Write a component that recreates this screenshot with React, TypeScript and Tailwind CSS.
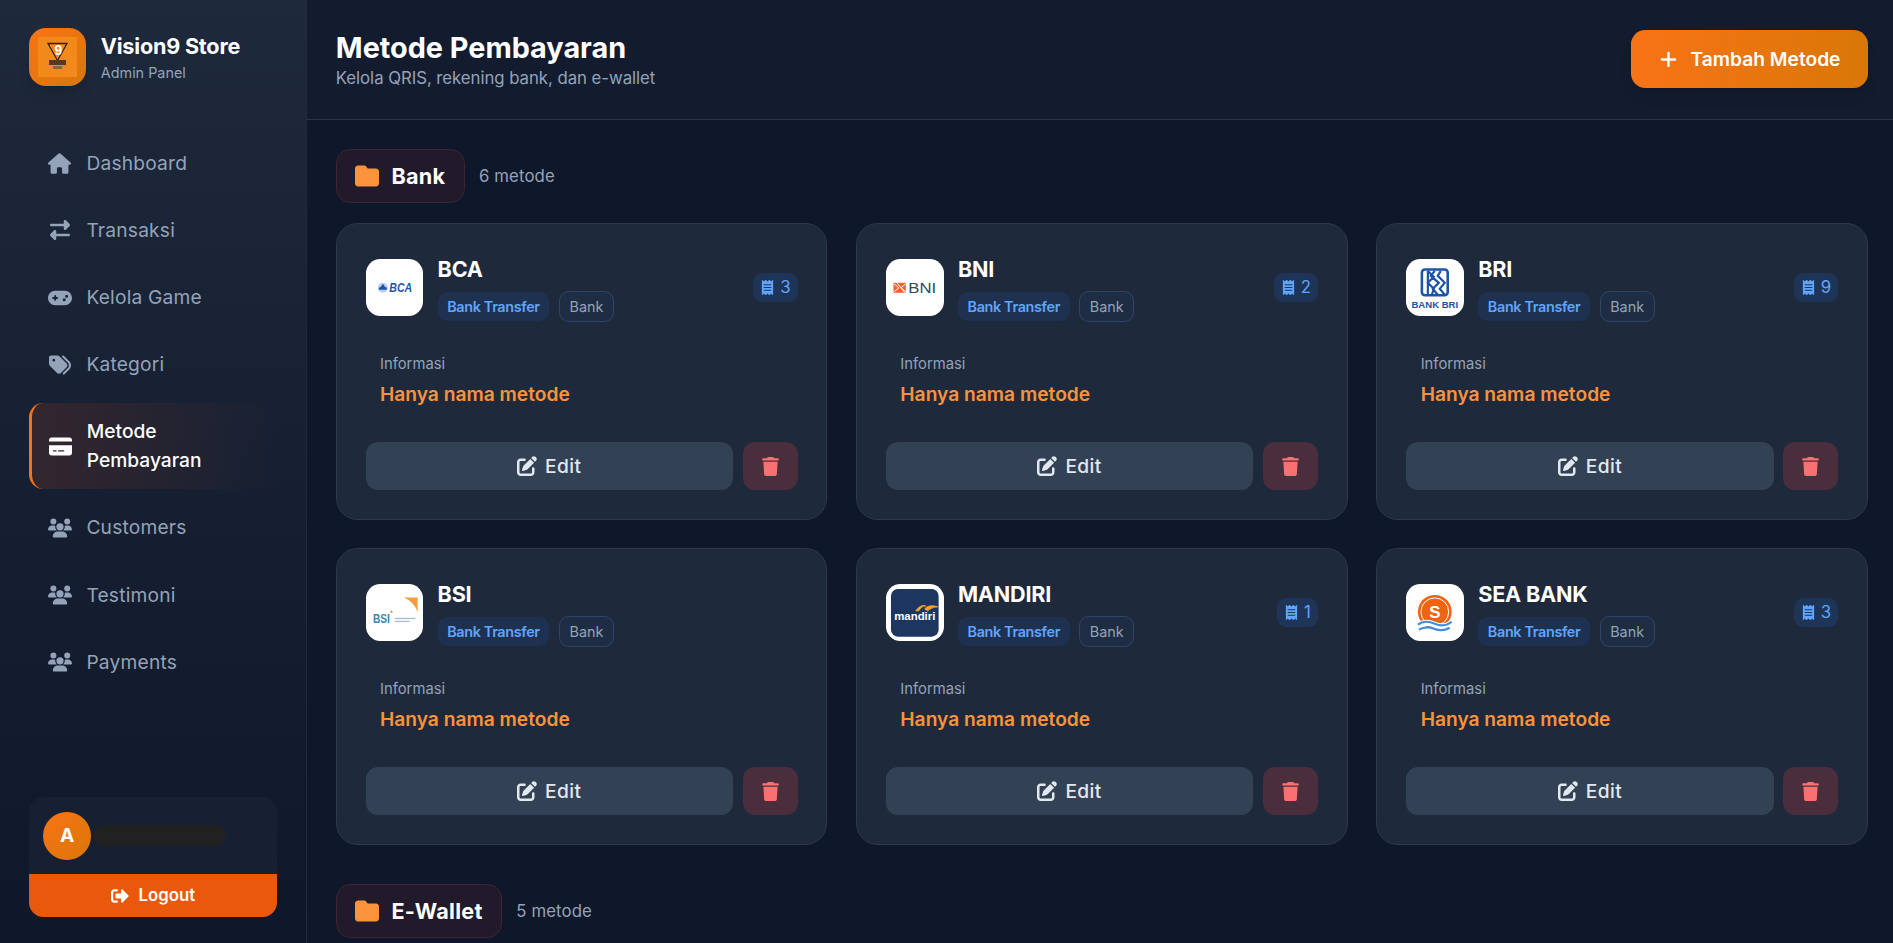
import type { ReactNode } from "react";
import { FaReceipt, FaSignOutAlt } from "react-icons/fa";
import {
  FaCreditCard, FaFolder, FaGamepad, FaHouse, FaPenToSquare, FaPlus, FaRightLeft,
  FaTags, FaTrash, FaUsers,
} from "react-icons/fa6";

const nav = [
  { label: "Dashboard", icon: <FaHouse size={23} /> },
  { label: "Transaksi", icon: <FaRightLeft size={20} /> },
  { label: "Kelola Game", icon: <FaGamepad size={24} /> },
  { label: "Kategori", icon: <FaTags size={22} /> },
  { label: "Metode Pembayaran", icon: <FaCreditCard size={23} />, active: true },
  { label: "Customers", icon: <FaUsers size={24} /> },
  { label: "Testimoni", icon: <FaUsers size={24} /> },
  { label: "Payments", icon: <FaUsers size={24} /> },
];

function BcaLogo() {
  return (
    <svg viewBox="0 0 58 58" className="w-full h-full">
      <circle cx="17" cy="29" r="5" fill="#bcd0ea" />
      <path d="M13 31h8v-2l-2-1-2-3-2 3-2 1z" fill="#1a56a8" />
      <text x="23.500" y="33.500" fontSize="12.500" fontWeight="800" fontStyle="italic" fill="#1a56a8" fontFamily="Liberation Sans, sans-serif" textLength="23" lengthAdjust="spacingAndGlyphs">BCA</text>
    </svg>
  );
}

function BniLogo() {
  return (
    <svg viewBox="0 0 58 58" className="w-full h-full">
      <rect x="7.500" y="24" width="12.500" height="10" fill="#f0642c" />
      <path d="M8 25l5 4-5 4M20 25l-5 4 5 4M11 24l8 10" stroke="#fff" strokeWidth="1" fill="none" />
      <text x="22.500" y="34" fontSize="15" fill="#2d4a68" fontFamily="Liberation Sans, sans-serif" textLength="28" lengthAdjust="spacingAndGlyphs">BNI</text>
    </svg>
  );
}

function BriLogo() {
  return (
    <svg viewBox="0 0 58 58" className="w-full h-full">
      <rect x="16" y="10.500" width="26" height="26" rx="3" fill="#fff" stroke="#1c54a6" strokeWidth="2.600" />
      <path d="M22 12v24M22 12l6 6-6 6 6 6-2 6M29 12l-4 5 8 7-6 6 5 6M35 12l-3 5 7 7-5 6 5 6" fill="none" stroke="#1c54a6" strokeWidth="2.200" />
      <text x="5.500" y="49" fontSize="9.800" fontWeight="700" fill="#1c54a6" fontFamily="Liberation Sans, sans-serif" textLength="47" lengthAdjust="spacingAndGlyphs">BANK BRI</text>
    </svg>
  );
}

function BsiLogo() {
  return (
    <svg viewBox="0 0 58 58" className="w-full h-full">
      <path d="M38 13.500h14v15c-2-7-7-12-14-15z" fill="#f59a42" />
      <text x="7" y="39" fontSize="13.500" fontWeight="700" fill="#3f86a8" fontFamily="Liberation Sans, sans-serif" textLength="17" lengthAdjust="spacingAndGlyphs">BSI</text>
      <circle cx="25.600" cy="28" r="1.200" fill="#f59a42" />
      <rect x="29" y="34" width="21" height="1.400" fill="#a9c0cc" />
      <rect x="29" y="37" width="15" height="1.400" fill="#a9c0cc" />
    </svg>
  );
}

function MandiriLogo() {
  return (
    <svg viewBox="0 0 58 58" className="w-full h-full">
      <rect x="5" y="5" width="48" height="48" rx="7" fill="#1d3660" />
      <path d="M30 27c3-4 6-6 10-5-3 0-5 2-7 5zM39 25c3-3 7-4 13-2-4 0-8 2-10 4z" fill="#f2a033" stroke="#f2a033" />
      <text x="29" y="36" textAnchor="middle" fontSize="11.500" fontWeight="600" fill="#fff" fontFamily="Liberation Sans, sans-serif">mandiri</text>
    </svg>
  );
}

function SeaLogo() {
  return (
    <svg viewBox="0 0 58 58" className="w-full h-full">
      <circle cx="29" cy="28" r="17" fill="#ee6413" />
      <circle cx="29" cy="28" r="14" fill="none" stroke="#fff" strokeWidth="1" />
      <text x="29" y="34" textAnchor="middle" fontSize="17" fontWeight="700" fill="#fff" fontFamily="Liberation Sans, sans-serif">S</text>
      <path d="M12 42c5-4 10-4 17-1s12 2 17-2" fill="none" stroke="#fff" strokeWidth="6" />
      <path d="M12 41c5-4 10-4 17-1s12 2 17-2M13 46c5-3 10-3 15-1s11 2 16-1" fill="none" stroke="#3f8fe0" strokeWidth="2.200" />
    </svg>
  );
}

const banks: { name: string; logo: ReactNode; count?: number }[] = [
  { name: "BCA", logo: <BcaLogo />, count: 3 },
  { name: "BNI", logo: <BniLogo />, count: 2 },
  { name: "BRI", logo: <BriLogo />, count: 9 },
  { name: "BSI", logo: <BsiLogo /> },
  { name: "MANDIRI", logo: <MandiriLogo />, count: 1 },
  { name: "SEA BANK", logo: <SeaLogo />, count: 3 },
];

function SectionHead({ title, count }: { title: string; count: string }) {
  return (
    <div className="flex items-center gap-[14px]">
      <div className="flex items-center gap-[12px] h-[54px] px-[18.6px] rounded-[14.4px] bg-[#211a2a] border border-[#3d2534]">
        <FaFolder size={24} className="text-[#fb923c]" />
        <span className="text-[21.6px] font-bold tracking-[0.3px] text-white">{title}</span>
      </div>
      <span className="text-[16.8px] leading-[27px] pt-[1px] tracking-[0.1px] text-[#94a3b8]">{count}</span>
    </div>
  );
}

function MethodCard({ name, logo, count }: { name: string; logo: ReactNode; count?: number }) {
  return (
    <div className="h-[297px] rounded-[21.6px] bg-[#1e293b] border border-[#2c3a4f] p-[28.8px] flex flex-col">
      <div className="flex items-center gap-[14.4px]">
        <div className="w-[57.6px] h-[57.6px] shrink-0 rounded-[14.4px] bg-white overflow-hidden">{logo}</div>
        <div className="flex-1">
          <div className="text-[21.6px] leading-[33.6px] font-bold tracking-[-0.2px] text-white">{name}</div>
          <div className="flex items-center gap-[9.6px] mt-[4.8px]">
            <span className="h-[29px] flex items-center px-[9.6px] rounded-[9.6px] bg-[#1f3151] text-[#60a5fa] text-[14.4px] font-semibold tracking-[-0.35px]">Bank Transfer</span>
            <span className="h-[31px] flex items-center px-[9.6px] rounded-[9.6px] bg-[#1e2c44] border border-[#2f4568] text-[#94a3b8] text-[14.4px]">Bank</span>
          </div>
        </div>
        {count !== undefined && (
          <div className="h-[29px] flex items-center gap-[5px] px-[7px] rounded-[9.6px] bg-[#1e3558] text-[#60a5fa] text-[16.8px]">
            <FaReceipt size={15} />
            {count}
          </div>
        )}
      </div>
      <div className="px-[14.4px] mt-[32px]">
        <div className="text-[14.8px] leading-[21.6px] text-[#94a3b8]">Informasi</div>
        <div className="text-[19.2px] leading-[28.8px] font-semibold text-[#fb923c] mt-[3.8px]">Hanya nama metode</div>
      </div>
      <div className="flex gap-[9.6px] mt-auto">
        <button className="flex-1 h-[48px] flex items-center justify-center gap-[8px] rounded-[12px] bg-[#334155] text-[#e2e8f0] text-[19.2px] font-medium tracking-[0.4px]">
          <FaPenToSquare size={20} />
          Edit
        </button>
        <button className="w-[55px] h-[48px] flex items-center justify-center rounded-[12px] bg-[#4a2e3b] text-[#f87171]">
          <FaTrash size={19} />
        </button>
      </div>
    </div>
  );
}

export default function App() {
  return (
    <div className="flex h-screen overflow-hidden bg-[#0f172a] font-['Inter',sans-serif]">
      <aside className="w-[307px] shrink-0 flex flex-col bg-gradient-to-b from-[#1e293b] to-[#0f172a] border-r border-[#1f2a3d] px-[28.8px] pt-[28px] pb-[26px]">
        <div className="flex items-center gap-[14.4px] h-[57.6px] mb-[48.8px]">
          <div className="w-[57.6px] h-[57.6px] flex items-center justify-center rounded-[16.8px] bg-gradient-to-br from-[#f97316] to-[#d97706] shadow-lg">
            <svg viewBox="0 0 39 40" className="w-[39px] h-[40px] bg-[#f28a1b]">
              <path d="M10 6.500h19l-9.500 17z" fill="none" stroke="#2b2320" strokeWidth="1.300" />
              <text x="20.500" y="18" textAnchor="middle" fontSize="14" fontWeight="700" fill="#fff" fontFamily="Liberation Sans, sans-serif">9</text>
              <rect x="11" y="23" width="17" height="5" fill="#5a3a1c" />
              <rect x="15" y="29" width="9" height="3" fill="#8a6434" />
            </svg>
          </div>
          <div className="pt-[3px]">
            <div className="text-[21.6px] leading-[29px] font-bold tracking-[-0.2px] text-white">Vision9 Store</div>
            <div className="text-[14.4px] leading-[23px] text-[#94a3b8]">Admin Panel</div>
          </div>
        </div>

        <nav className="flex flex-col gap-[9.6px]">
          {nav.map((n) => (
            <div
              key={n.label}
              className={
                n.active
                  ? "flex items-center gap-[14.4px] pl-[16.6px] pr-[18.2px] py-[14.4px] rounded-[14.4px] border-l-[3.6px] border-[#f97316] bg-gradient-to-r from-[#34262e] to-transparent text-white"
                  : "flex items-center gap-[14.4px] px-[19.2px] py-[14.4px] rounded-[14.4px] text-[#94a3b8]"
              }
            >
              <span className="w-[24px] shrink-0 flex justify-center">{n.icon}</span>
              <span className={n.active ? "text-[19.2px] leading-[28.8px] font-medium" : "text-[19.2px] leading-[28.8px] tracking-[0.2px]"}>{n.label}</span>
            </div>
          ))}
        </nav>

        <div className="mt-auto rounded-[14.4px] overflow-hidden bg-[#162032]">
          <div className="h-[77px] flex items-center gap-[3px] px-[14.4px]">
            <div className="w-[48px] h-[48px] flex items-center justify-center rounded-full bg-gradient-to-br from-[#f97316] to-[#d97706] text-white font-bold text-[19.2px]">A</div>
            <div className="w-[132px] h-[21px] rounded-full bg-[#212121]" />
          </div>
          <button className="w-full h-[43px] flex items-center justify-center gap-[9.6px] bg-[#ea580c] text-white text-[16.8px] font-semibold">
            <FaSignOutAlt size={18} />
            Logout
          </button>
        </div>
      </aside>

      <main className="flex-1 min-w-0 overflow-hidden">
        <header className="h-[119.5px] flex items-center justify-between pl-[28.8px] pr-[25px] bg-[#131c2f] border-b border-[#2a3548]">
          <div className="mt-[1px]">
            <h1 className="text-[28.8px] leading-[36px] font-bold text-white">Metode Pembayaran</h1>
            <p className="text-[16.8px] leading-[24px] tracking-[-0.05px] text-[#94a3b8]">Kelola QRIS, rekening bank, dan e-wallet</p>
          </div>
          <button className="w-[237px] h-[58px] flex items-center justify-center gap-[13px] rounded-[14.4px] bg-gradient-to-r from-[#f97316] to-[#d97706] text-white text-[19.2px] font-semibold shadow-lg">
            <FaPlus size={19} />
            Tambah Metode
          </button>
        </header>

        <div className="pl-[28.8px] pr-[25px] pt-[29.5px]">
          <SectionHead title="Bank" count="6 metode" />
          <div className="grid grid-cols-3 gap-x-[28.8px] gap-y-[28px] mt-[20px]">
            {banks.map((b) => (
              <MethodCard key={b.name} {...b} />
            ))}
          </div>
          <div className="mt-[39px]">
            <SectionHead title="E-Wallet" count="5 metode" />
          </div>
        </div>
      </main>
    </div>
  );
}
